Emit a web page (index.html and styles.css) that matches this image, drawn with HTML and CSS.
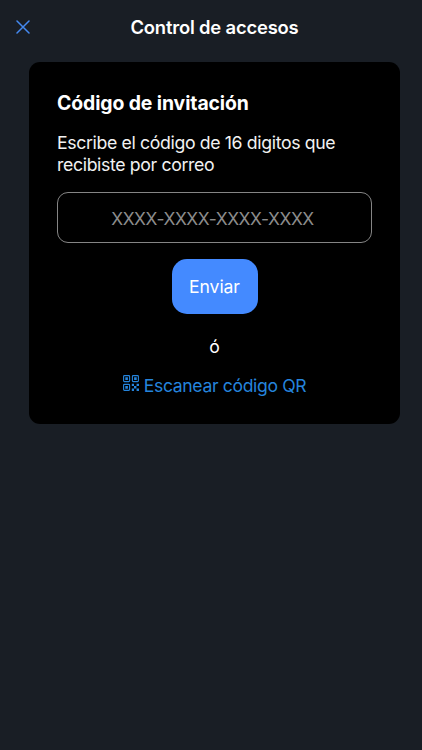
FILE: index.html
```html
<!DOCTYPE html>
<html lang="es">
<head>
    <meta charset="UTF-8">
    <meta name="viewport" content="width=device-width, initial-scale=1.0">
    <title>Control de accesos</title>
    <link rel="stylesheet" href="styles.css">
</head>
<body>

<header class="top-bar">
    <button type="button" class="close-button" aria-label="Cerrar">
        <svg width="14" height="14" viewBox="0 0 14 14">
            <path d="M1 1L13 13M13 1L1 13"/>
        </svg>
    </button>
    <h1>Control de accesos</h1>
</header>

<main class="card">
    <h2>Código de invitación</h2>
    <p class="description">Escribe el código de 16 digitos que recibiste por correo</p>

    <form class="code-form">
        <input type="text" class="code-input" name="code" maxlength="19" placeholder="XXXX-XXXX-XXXX-XXXX">
        <button type="submit" class="send-button">Enviar</button>
    </form>

    <p class="separator">ó</p>

    <a href="#" class="scan-link">
        <svg class="qr-icon" width="16" height="16" viewBox="0 0 16 16">
            <g class="qr-frame">
                <rect x="0.6" y="0.6" width="6" height="6" rx="0.8"/>
                <rect x="9.4" y="0.6" width="6" height="6" rx="0.8"/>
                <rect x="0.6" y="9.4" width="6" height="6" rx="0.8"/>
            </g>
            <path d="M2.3 2.3h2.6v2.6H2.3zM11.1 2.3h2.6v2.6h-2.6zM2.3 11.1h2.6v2.6H2.3zM8.8 8.8H11V11H8.8zM11 11h2.4v2.4H11zM13.6 8.8H16V11h-2.4zM8.8 13.5H11V16H8.8zM13.6 13.5H16V16h-2.4z"/>
        </svg>
        <span>Escanear código QR</span>
    </a>
</main>

</body>
</html>
```
FILE: styles.css
```css
body {
    font-family: 'Inter', sans-serif;
    margin: 0;
    background-color: #191e25;
    color: #fff;
    min-height: 100vh;
}

.top-bar {
    display: grid;
    grid-template-columns: 45px 1fr 38px;
    align-items: center;
    height: 54px;
}

.top-bar h1 {
    margin: 0 0 1px;
    font-size: 18.4px;
    font-weight: 600;
    letter-spacing: -0.18px;
    text-align: center;
}

.close-button {
    display: flex;
    justify-content: center;
    padding: 0;
    border: none;
    background: none;
    cursor: pointer;
}

.close-button svg {
    fill: none;
    stroke: #4489f0;
    stroke-width: 1.5;
    stroke-linecap: round;
}

.card {
    box-sizing: border-box;
    height: 362px;
    margin: 8px 22px 0 29px;
    padding: 29px 28px 0;
    border-radius: 11px;
    background-color: #000;
}

.card h2 {
    margin: 0 0 17px;
    font-size: 19.4px;
    font-weight: 700;
    line-height: 24px;
    letter-spacing: -0.1px;
}

.description {
    margin: 0 0 16px;
    font-size: 17.7px;
    line-height: 22px;
    letter-spacing: -0.36px;
    color: #f2f2f2;
}

.code-form {
    display: flex;
    flex-direction: column;
    align-items: center;
    gap: 16px;
}

.code-input {
    box-sizing: border-box;
    width: 100%;
    height: 51px;
    padding: 1px 12px 0 8px;
    border: 1px solid #858585;
    border-radius: 11px;
    background-color: #000;
    color: #fff;
    font-family: inherit;
    font-size: 17.4px;
    letter-spacing: -0.4px;
    text-align: center;
}

.code-input::placeholder {
    color: #8c8c8c;
}

.send-button {
    width: 86px;
    height: 55px;
    padding: 0;
    border: none;
    border-radius: 15px;
    background-color: #448aff;
    color: #fff;
    font-family: inherit;
    font-size: 17.6px;
    letter-spacing: -0.1px;
    cursor: pointer;
}

.separator {
    margin: 22px 0 17px;
    font-size: 17.6px;
    line-height: 22px;
    text-align: center;
}

.scan-link {
    display: flex;
    justify-content: center;
    gap: 5px;
    color: #2584dc;
    font-size: 17.6px;
    line-height: 22px;
    letter-spacing: -0.36px;
    text-decoration: none;
}

.qr-icon {
    fill: currentColor;
}

.qr-frame {
    fill: none;
    stroke: currentColor;
    stroke-width: 1.1;
}
```
